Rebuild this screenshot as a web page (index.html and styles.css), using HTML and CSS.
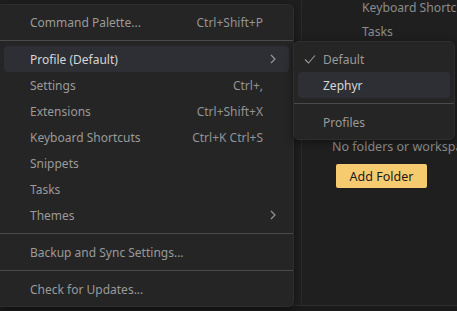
FILE: index.html
```html
<!DOCTYPE html>
<html lang="en">
<head>
  <meta charset="UTF-8" />
  <title>Profile menu</title>
  <link rel="stylesheet" href="styles.css">
</head>
<body>

  <!-- Workbench behind the menu -->
  <div class="workbench">
    <div class="sidebar"></div>
    <div class="editor">
      <div class="recent">
        <span>Keyboard Shortcuts</span>
        <span>Tasks</span>
      </div>
      <div class="empty">
        <p>No folders or workspace opened</p>
        <button class="add-folder">Add Folder</button>
      </div>
    </div>
  </div>
  <div class="statusbar"></div>

  <!-- Main menu -->
  <nav class="menu main-menu">
    <div class="item"><span>Command Palette...</span><span class="key">Ctrl+Shift+P</span></div>
    <div class="sep"></div>
    <div class="item active"><span>Profile (Default)</span>
      <svg class="chevron" width="8" height="10" viewBox="0 0 8 10"><path d="M2 1 L6 5 L2 9" /></svg>
    </div>
    <div class="item"><span>Settings</span><span class="key">Ctrl+,</span></div>
    <div class="item"><span>Extensions</span><span class="key">Ctrl+Shift+X</span></div>
    <div class="item"><span>Keyboard Shortcuts</span><span class="key">Ctrl+K Ctrl+S</span></div>
    <div class="item"><span>Snippets</span></div>
    <div class="item"><span>Tasks</span></div>
    <div class="item"><span>Themes</span>
      <svg class="chevron" width="8" height="10" viewBox="0 0 8 10"><path d="M2 1 L6 5 L2 9" /></svg>
    </div>
    <div class="sep"></div>
    <div class="item"><span>Backup and Sync Settings...</span></div>
    <div class="sep"></div>
    <div class="item"><span>Check for Updates...</span></div>
  </nav>

  <!-- Profile submenu -->
  <nav class="menu sub-menu">
    <div class="item">
      <svg class="check" width="12" height="12" viewBox="0 0 12 12"><path d="M1 6.5 L4.5 10 L11 2.5" /></svg>
      <span>Default</span>
    </div>
    <div class="item active"><span>Zephyr</span></div>
    <div class="sep"></div>
    <div class="item"><span>Profiles</span></div>
  </nav>

</body>
</html>
```

FILE: styles.css
```css
* {
  margin: 0;
  padding: 0;
  box-sizing: border-box;
}

html, body {
  height: 100%;
  overflow: hidden;
}

body {
  background: #1f1f1f;
  font-family: 'Noto Sans', 'Open Sans', sans-serif;
  font-size: 12px;
  color: #9a9a9a;
  position: relative;
}

/* Workbench */
.workbench {
  display: flex;
  height: 305px;
}

.sidebar {
  width: 302px;
  border-right: 1px solid #2b2b2b;
}

.editor {
  flex: 1;
  display: flex;
  flex-direction: column;
  padding-left: 30px;
  white-space: nowrap;
  overflow: hidden;
}

.recent {
  display: flex;
  flex-direction: column;
  gap: 7px;
  padding-left: 30px;
  margin-top: -1px;
  color: #8c8c8c;
  font-size: 12.2px;
}

.empty {
  margin-top: 98px;
  color: #8c8c8c;
  font-size: 12.5px;
}

.add-folder {
  margin: 9px 0 0 4px;
  width: 91px;
  height: 24px;
  background: #f6cb6f;
  border: none;
  border-radius: 2px;
  color: #1a1a1a;
  font-family: inherit;
  font-size: 12.5px;
}

.statusbar {
  height: 6px;
  background: #1a1a1a;
  border-top: 1px solid #2c2c2c;
}

/* Menus */
.menu {
  position: absolute;
  background: #252525;
  border: 1px solid #2e2e2e;
  border-radius: 6px;
  padding: 4px 0;
  box-shadow: 0 2px 8px rgba(0,0,0,0.45);
}

.main-menu {
  left: 0;
  top: 4px;
  width: 294px;
  border-left: none;
  border-top-left-radius: 0;
  border-bottom-left-radius: 0;
}

.sub-menu {
  left: 293px;
  top: 41px;
  width: 162px;
}

.item {
  display: flex;
  align-items: center;
  justify-content: space-between;
  height: 26px;
  margin: 0 4px;
  padding: 0 26px 0 26px;
  border-radius: 4px;
  white-space: nowrap;
}

.item.active {
  background: #2e2f35;
  color: #d6d6d6;
}

.key {
  color: #939393;
}

.chevron {
  margin-right: -14px;
  fill: none;
  stroke: #9a9a9a;
  stroke-width: 1.1;
}

.sep {
  height: 1px;
  background: #4a4a4a;
  margin: 5px 0;
}

.sub-menu .item {
  justify-content: flex-start;
  padding: 0 0 0 25px;
}

.check {
  margin-left: -19px;
  margin-right: 7px;
  fill: none;
  stroke: #9a9a9a;
  stroke-width: 1.1;
}
```
